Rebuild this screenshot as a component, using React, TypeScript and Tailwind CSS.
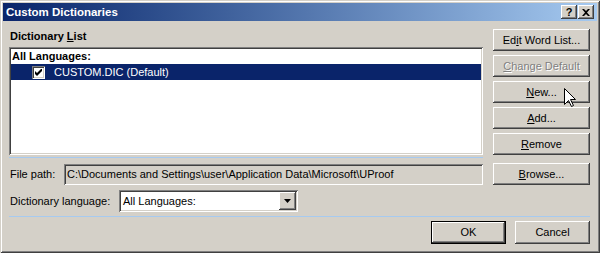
import React from "react";

const raised =
  "shadow-[inset_-1px_-1px_#404040,inset_1px_1px_#ffffff,inset_-2px_-2px_#808080,inset_2px_2px_#d4d0c8]";
const sunken =
  "shadow-[inset_1px_1px_#808080,inset_-1px_-1px_#ffffff,inset_2px_2px_#404040,inset_-2px_-2px_#d4d0c8]";

function Btn({ children, disabled }: { children: React.ReactNode; disabled?: boolean }) {
  return (
    <div
      className={`flex h-[22px] w-[97px] items-center justify-center bg-[#d4d0c8] ${raised} ${
        disabled ? "text-[#808080] [text-shadow:1px_1px_0_#ffffff]" : "text-black"
      }`}
    >
      <span>{children}</span>
    </div>
  );
}

export default function App() {
  return (
    <div
      className="relative flex h-[253px] w-[600px] flex-col bg-[#d4d0c8] p-[3px] text-[11px] leading-[13px] text-black shadow-[inset_1px_1px_#d4d0c8,inset_-1px_-1px_#404040,inset_2px_2px_#ffffff,inset_-2px_-2px_#808080]"
      style={{ fontFamily: "Tahoma, 'Liberation Sans', Arial, sans-serif" }}
    >
      {/* Title bar */}
      <div className="flex h-[18px] items-center bg-gradient-to-r from-[#0a246a] to-[#a6caf0] pl-[3px] pr-[3px]">
        <span className="flex-1 font-bold text-white text-[11.5px]">Custom Dictionaries</span>
        <div className={`flex h-[14px] w-[16px] items-center justify-center bg-[#d4d0c8] ${raised}`}>
          <span className="text-[11px] font-bold leading-none">?</span>
        </div>
        <div className={`ml-[1px] flex h-[14px] w-[16px] items-center justify-center bg-[#d4d0c8] ${raised}`}>
          <svg width="8" height="7" viewBox="0 0 8 7">
            <path d="M0 0h2l2 2 2-2h2L5 3.5 8 7H6L4 5 2 7H0l3-3.5z" fill="#000" />
          </svg>
        </div>
      </div>

      {/* Body */}
      <div className="flex flex-1 flex-col pl-[6px] pr-[7px] pt-[8px]">
        <div className="flex gap-[10px]">
          <div className="flex w-[474px] flex-col">
            <div className="h-[18px] pl-[1px] pt-[1px] font-bold">
              Dictionary <span className="underline">L</span>ist
            </div>
            <div className={`h-[108px] bg-white p-[2px] ${sunken}`}>
              <div className="h-[15px] pl-[1px] pt-[1px] font-bold">All Languages:</div>
              <div className="flex h-[16px] items-center bg-[#0a246a] text-white">
                <div className={`ml-[21px] flex h-[13px] w-[13px] items-center justify-center bg-white ${sunken}`}>
                  <svg width="7" height="7" viewBox="0 0 7 7">
                    <path d="M0 2v3l2 2 5-5V-1L2 4z" fill="#000" />
                  </svg>
                </div>
                <span className="ml-[9px]">CUSTOM.DIC (Default)</span>
              </div>
            </div>
          </div>
          <div className="flex w-[97px] flex-col gap-[4px]">
            <Btn>
              Ed<span className="underline">i</span>t Word List...
            </Btn>
            <Btn disabled>
              <span className="underline">C</span>hange Default
            </Btn>
            <Btn>
              <span className="underline">N</span>ew...
            </Btn>
            <Btn>
              <span className="underline">A</span>dd...
            </Btn>
            <Btn>
              <span className="underline">R</span>emove
            </Btn>
          </div>
        </div>

        <div className="mt-[2px] h-px w-[474px] bg-[#a6caf0]" />

        <div className="mt-[5px] flex items-center gap-[10px]">
          <div className="flex w-[474px] items-center">
            <span className="w-[55px] pl-[1px]">File path:</span>
            <div className={`flex h-[21px] flex-1 items-center bg-[#d4d0c8] pl-[3px] ${sunken}`}>
              C:\Documents and Settings\user\Application Data\Microsoft\UProof
            </div>
          </div>
          <Btn>
            <span className="underline">B</span>rowse...
          </Btn>
        </div>

        <div className="mt-[5px] flex items-center">
          <span className="w-[110px] pl-[1px]">Dictionary language:</span>
          <div className={`flex h-[22px] w-[179px] items-center bg-white p-[2px] ${sunken}`}>
            <span className="flex-1 pl-[2px]">All Languages:</span>
            <div className={`flex h-[18px] w-[17px] items-center justify-center bg-[#d4d0c8] ${raised}`}>
              <svg width="7" height="4" viewBox="0 0 7 4">
                <path d="M0 0h7L3.5 4z" fill="#000" />
              </svg>
            </div>
          </div>
        </div>

        <div className="mt-[4px] h-px w-full bg-[#a6caf0]" />

        <div className="mt-[4px] flex justify-end gap-[9px] pr-0">
          <div className="h-[23px] w-[75px] border border-black">
            <div className={`flex h-full w-full items-center justify-center bg-[#d4d0c8] ${raised}`}>OK</div>
          </div>
          <div className={`flex h-[23px] w-[75px] items-center justify-center bg-[#d4d0c8] ${raised}`}>
            Cancel
          </div>
        </div>
      </div>

      {/* Mouse cursor */}
      <svg className="absolute left-[564px] top-[88px]" width="13" height="20" viewBox="0 0 13 20">
        <path
          d="M0.5 0.5 L0.5 16.5 L4.5 12.5 L7.5 18.5 L9.5 17.5 L6.5 11.5 L11.5 11.5 Z"
          fill="#fff"
          stroke="#000"
          strokeWidth="1"
          strokeLinejoin="miter"
        />
      </svg>
    </div>
  );
}
